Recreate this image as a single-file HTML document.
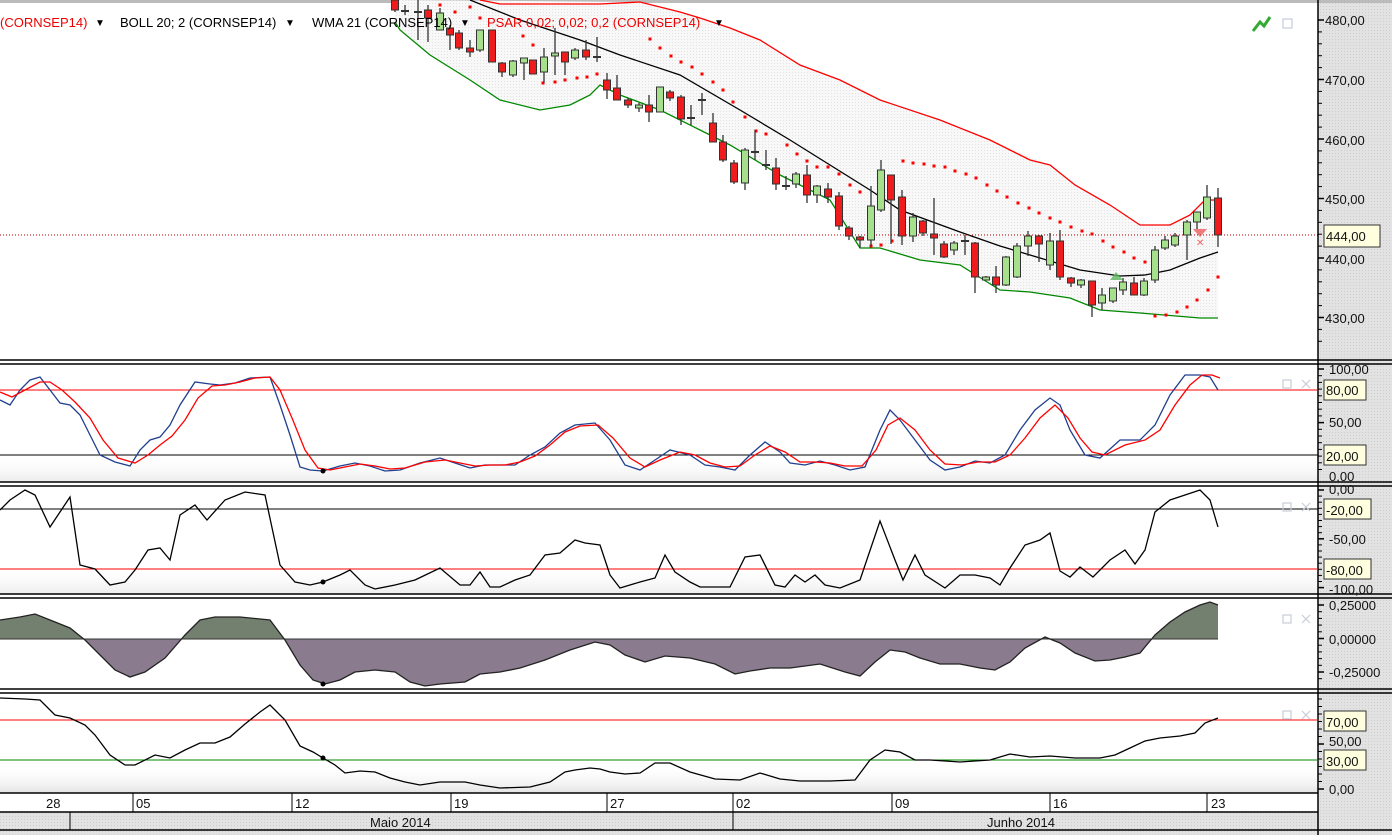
<!DOCTYPE html>
<html><head><meta charset="utf-8"><style>
html,body{margin:0;padding:0;background:#fff;}
svg{display:block;font-family:"Liberation Sans",sans-serif;}
</style></head><body>
<svg id="s" width="1392" height="835" viewBox="0 0 1392 835" xmlns="http://www.w3.org/2000/svg">
<defs>
<pattern id="dots" width="3" height="3" patternUnits="userSpaceOnUse"><rect width="3" height="3" fill="#f8f8f8"/><rect width="1" height="1" fill="#e2e2e2"/></pattern>
<pattern id="ax" width="3" height="3" patternUnits="userSpaceOnUse"><rect width="3" height="3" fill="#e2e2e2"/><rect width="1" height="1" fill="#cfcfcf"/></pattern>
<clipPath id="above"><rect x="0" y="597" width="1318" height="42"/></clipPath>
<clipPath id="below"><rect x="0" y="639" width="1318" height="52"/></clipPath>
<linearGradient id="gb" x1="0" y1="0" x2="0" y2="1"><stop offset="0" stop-color="#fff" stop-opacity="0"/><stop offset="1" stop-color="#d8d8d8"/></linearGradient>
</defs>
<rect x="0" y="0" width="1392" height="835" fill="#fff"/>
<rect x="1318" y="0" width="74" height="835" fill="url(#ax)"/>
<rect x="0" y="812" width="1318" height="23" fill="url(#ax)"/>
<rect x="0" y="0" width="1392" height="3" fill="#bbb"/>
<rect x="0" y="455" width="1318" height="27" fill="url(#gb)" opacity="0.5"/>
<rect x="0" y="565" width="1318" height="30" fill="url(#gb)" opacity="0.5"/>
<rect x="0" y="765" width="1318" height="28" fill="url(#gb)" opacity="0.7"/>

<polygon fill="url(#dots)" points="395,0 640,2 700,18 760,40 800,65 840,80 880,100 940,120 990,140 1050,165 1075,185 1110,205 1140,225 1170,225 1190,215 1205,200 1218,200 1218,318 1200,318 1140,313 1100,310 1070,298 1030,292 1000,290 960,265 920,260 880,248 860,248 830,200 780,175 730,145 700,130 660,110 620,95 600,85 590,95 570,105 540,110 500,100 470,80 430,55 400,30 395,20"/>
<polyline fill="none" stroke="#f00" stroke-width="1.3" points="480,0 500,4 560,4 600,4 640,2 680,12 700,18 730,28 760,40 800,65 840,80 880,100 940,120 990,140 1030,160 1050,165 1075,185 1110,205 1140,225 1170,225 1190,215 1205,200 1218,200"/>
<polyline fill="none" stroke="#000" stroke-width="1.3" points="470,0 520,20 580,40 620,55 680,75 740,110 790,140 830,165 870,190 900,210 960,232 1000,246 1040,258 1080,270 1120,276 1145,275 1170,270 1200,258 1218,252"/>
<polyline fill="none" stroke="#080" stroke-width="1.3" points="395,22 400,30 430,55 470,80 500,100 540,110 570,105 590,95 600,85 620,95 660,110 700,130 730,145 780,175 830,200 860,248 880,248 920,260 960,265 1000,290 1030,292 1070,298 1100,310 1140,313 1200,318 1218,318"/>
<line x1="0" y1="235" x2="1318" y2="235" stroke="#c00" stroke-width="1" stroke-dasharray="1,2"/>
<g id="psar" fill="#f00"></g>
<g id="candles"></g>
<polygon points="1110,280 1116,272 1123,280" fill="#5cb85c" opacity="0.8"/>
<polygon points="1193,229 1207,229 1200,237" fill="#e44" opacity="0.7"/>
<text x="1196" y="246" font-size="10" fill="#e66">✕</text>

<g font-size="13">
<text x="0" y="27" fill="#e00">(CORNSEP14)</text><text x="95" y="26" font-size="10">▼</text>
<text x="120" y="27" fill="#000">BOLL 20; 2 (CORNSEP14)</text><text x="285" y="26" font-size="10">▼</text>
<text x="312" y="27" fill="#000">WMA 21 (CORNSEP14)</text><text x="460" y="26" font-size="10">▼</text>
<text x="487" y="27" fill="#e00">PSAR 0,02; 0,02; 0,2 (CORNSEP14)</text><text x="714" y="26" font-size="10">▼</text>
</g>
<path d="M1253,31 L1260,22 L1264,26 L1270,17" stroke="#3a3" stroke-width="3" fill="none"/>
<rect x="1283" y="19" width="9" height="9" fill="none" stroke="#b8c0d8"/>

<g stroke="#000" stroke-width="1.5">
<line x1="0" y1="360" x2="1392" y2="360"/><line x1="0" y1="364" x2="1392" y2="364"/>
<line x1="0" y1="482" x2="1392" y2="482"/><line x1="0" y1="486" x2="1392" y2="486"/>
<line x1="0" y1="594" x2="1392" y2="594"/><line x1="0" y1="598" x2="1392" y2="598"/>
<line x1="0" y1="689" x2="1392" y2="689"/><line x1="0" y1="693" x2="1392" y2="693"/>
<line x1="0" y1="793" x2="1318" y2="793"/><line x1="0" y1="812" x2="1318" y2="812"/><line x1="0" y1="830" x2="1392" y2="830"/>
<line x1="1318" y1="0" x2="1318" y2="835"/>
</g>

<line x1="0" y1="390" x2="1318" y2="390" stroke="#f00"/>
<line x1="0" y1="455" x2="1318" y2="455" stroke="#000"/>
<polyline fill="none" stroke="#1f3f8f" stroke-width="1.3" points="0,400 10,405 20,390 30,380 40,377 50,390 60,403 70,405 80,415 90,435 100,455 115,462 130,466 140,450 150,440 160,437 170,425 180,405 195,382 210,384 220,385 235,383 250,378 270,377 280,405 290,435 300,467 310,470 323,471 340,466 355,463 370,466 385,471 400,470 420,463 440,458 455,463 470,468 485,465 500,465 515,465 530,455 545,447 560,433 575,425 595,423 610,440 625,465 640,470 655,460 670,450 690,455 705,465 720,467 735,470 750,455 765,442 780,452 790,463 805,465 820,461 835,465 850,470 865,467 880,430 890,410 900,420 915,440 930,460 945,470 960,467 975,461 990,463 1005,455 1020,430 1035,410 1050,398 1060,405 1070,430 1085,455 1100,458 1120,440 1140,440 1155,425 1170,395 1185,375 1200,375 1210,377 1218,390"/>
<polyline fill="none" stroke="#f00" stroke-width="1.3" points="0,392 12,397 25,390 40,382 50,382 62,390 75,402 90,418 103,440 118,458 135,463 148,455 160,445 172,436 185,420 198,398 212,386 225,385 240,382 255,378 270,377 280,390 292,418 305,450 318,468 330,470 345,467 360,464 375,466 390,469 405,468 425,462 445,460 460,463 475,466 490,465 505,465 520,462 535,456 550,445 565,432 580,426 598,425 613,438 630,458 645,467 660,460 680,452 695,455 710,463 725,467 740,466 755,455 770,446 785,452 800,462 815,462 830,463 845,466 862,466 876,450 888,425 900,418 915,430 930,450 945,464 962,465 978,462 995,462 1010,455 1025,438 1040,418 1055,405 1068,418 1080,438 1092,452 1105,455 1125,445 1145,440 1160,430 1175,405 1190,385 1202,375 1212,375 1220,378"/>
<circle cx="323" cy="471" r="2.5" fill="#000"/>

<line x1="0" y1="509" x2="1318" y2="509" stroke="#000"/>
<line x1="0" y1="569" x2="1318" y2="569" stroke="#f00"/>
<polyline fill="none" stroke="#000" stroke-width="1.3" points="0,510 10,500 25,490 35,495 50,527 70,497 80,565 95,569 110,585 125,582 135,570 148,550 160,548 170,560 180,515 195,505 207,520 225,500 245,492 265,495 280,565 295,582 310,585 323,582 340,575 350,570 365,585 375,589 395,585 415,580 440,568 460,585 470,585 480,572 490,587 500,587 515,580 530,575 545,555 560,553 575,540 585,543 600,545 610,575 620,588 640,582 655,578 665,555 675,572 690,582 700,587 720,587 730,587 745,557 760,555 775,585 785,587 795,575 805,582 815,575 825,585 840,588 860,580 880,521 895,560 903,580 915,555 925,575 945,588 960,575 975,575 990,578 1000,585 1010,568 1025,545 1040,540 1050,533 1060,571 1070,577 1080,567 1093,577 1110,560 1125,550 1135,564 1145,550 1155,512 1170,500 1185,495 1200,490 1210,500 1218,527"/>
<circle cx="323" cy="582" r="2.5" fill="#000"/>

<g id="macd"></g>

<line x1="0" y1="720" x2="1318" y2="720" stroke="#f00"/>
<line x1="0" y1="760" x2="1318" y2="760" stroke="#080"/>
<polyline fill="none" stroke="#000" stroke-width="1.3" points="0,698 25,699 40,700 55,715 70,718 85,725 95,735 110,755 125,765 135,765 155,755 170,758 185,750 200,743 215,743 230,737 245,724 260,712 270,705 285,720 300,746 313,752 323,758 335,765 345,773 360,771 375,772 390,778 405,782 420,785 440,782 465,782 480,785 500,788 530,787 550,782 565,772 575,770 590,768 600,769 610,772 625,774 640,773 655,763 670,763 690,772 715,779 740,780 760,773 780,779 800,781 830,781 855,780 870,760 885,750 900,752 915,760 930,760 960,762 990,760 1010,754 1030,757 1050,756 1075,758 1100,758 1115,755 1130,748 1145,741 1160,738 1180,736 1195,733 1205,723 1218,718"/>
<circle cx="323" cy="758" r="2.5" fill="#000"/>

<g fill="none" stroke="#c8ccd8" stroke-width="1.2">
<rect x="1283" y="380" width="8" height="8"/><path d="M1302,380 l8,8 M1310,380 l-8,8"/>
<rect x="1283" y="503" width="8" height="8"/><path d="M1302,503 l8,8 M1310,503 l-8,8"/>
<rect x="1283" y="615" width="8" height="8"/><path d="M1302,615 l8,8 M1310,615 l-8,8"/>
<rect x="1283" y="711" width="8" height="8"/><path d="M1302,711 l8,8 M1310,711 l-8,8"/>
</g>

<g stroke="#000" stroke-width="1">
<line x1="133" y1="793" x2="133" y2="812"/><line x1="292" y1="793" x2="292" y2="812"/><line x1="451" y1="793" x2="451" y2="812"/><line x1="607" y1="793" x2="607" y2="812"/><line x1="733" y1="793" x2="733" y2="812"/><line x1="892" y1="793" x2="892" y2="812"/><line x1="1050" y1="793" x2="1050" y2="812"/><line x1="1207" y1="793" x2="1207" y2="812"/>
<line x1="70" y1="812" x2="70" y2="830"/><line x1="733" y1="812" x2="733" y2="830"/>
</g>
<g font-size="13" fill="#111">
<text x="46" y="808">28</text><text x="136" y="808">05</text><text x="295" y="808">12</text><text x="454" y="808">19</text><text x="610" y="808">27</text><text x="736" y="808">02</text><text x="895" y="808">09</text><text x="1053" y="808">16</text><text x="1211" y="808">23</text>
<text x="370" y="827">Maio 2014</text><text x="987" y="827">Junho 2014</text>
</g>

<g id="ticks" stroke="#000"></g>
<g font-size="13" fill="#111">
<text x="1325" y="25">480,00</text><text x="1325" y="85">470,00</text><text x="1325" y="145">460,00</text><text x="1325" y="204">450,00</text><text x="1325" y="264">440,00</text><text x="1325" y="323">430,00</text>
<text x="1329" y="374">100,00</text><text x="1329" y="427">50,00</text><text x="1329" y="481">0,00</text>
<text x="1329" y="494">0,00</text><text x="1329" y="544">-50,00</text><text x="1329" y="594">-100,00</text>
<text x="1329" y="610">0,25000</text><text x="1329" y="644">0,00000</text><text x="1329" y="677">-0,25000</text>
<text x="1329" y="746">50,00</text><text x="1329" y="794">0,00</text>
</g>
<g font-size="13" fill="#111">
<rect x="1324" y="225" width="56" height="22" fill="#ffffe0" stroke="#333"/><text x="1326" y="241">444,00</text>
<rect x="1324" y="380" width="42" height="20" fill="#ffffe0" stroke="#333"/><text x="1326" y="395">80,00</text>
<rect x="1324" y="445" width="42" height="20" fill="#ffffe0" stroke="#333"/><text x="1326" y="461">20,00</text>
<rect x="1324" y="499" width="47" height="20" fill="#ffffe0" stroke="#333"/><text x="1326" y="515">-20,00</text>
<rect x="1324" y="559" width="47" height="20" fill="#ffffe0" stroke="#333"/><text x="1326" y="575">-80,00</text>
<rect x="1324" y="711" width="42" height="20" fill="#ffffe0" stroke="#333"/><text x="1326" y="727">70,00</text>
<rect x="1324" y="750" width="42" height="20" fill="#ffffe0" stroke="#333"/><text x="1326" y="766">30,00</text>
</g>
</svg>
<script>
var NS="http://www.w3.org/2000/svg";
function el(p,t,a){var e=document.createElementNS(NS,t);for(var k in a)e.setAttribute(k,a[k]);p.appendChild(e);return e;}
var C=[[395,0,10,0,12,'r'],[405,10,12,5,15,'d'],[418,11,13,0,40,'d'],[428,10,18,5,42,'r'],[440,13,30,8,30,'g'],[450,28,35,25,50,'r'],[459,33,48,30,50,'r'],[470,48,52,40,57,'r'],[480,30,50,30,52,'g'],[492,30,62,30,62,'r'],[502,63,72,62,77,'r'],[513,61,75,60,77,'g'],[524,58,63,58,80,'g'],[533,60,74,60,74,'r'],[544,57,72,48,83,'g'],[555,53,56,28,75,'g'],[565,52,62,52,75,'r'],[575,50,58,48,60,'g'],[586,50,57,40,60,'r'],[597,56,58,37,62,'d'],[607,80,90,73,99,'r'],[617,88,100,75,100,'r'],[628,100,105,98,108,'r'],[639,105,108,103,112,'g'],[649,105,112,95,122,'r'],[660,87,112,87,112,'g'],[670,92,98,90,101,'r'],[681,97,119,95,125,'r'],[691,117,119,105,125,'d'],[702,99,101,93,115,'d'],[713,123,142,113,142,'r'],[723,142,160,135,162,'r'],[734,163,182,160,184,'r'],[745,150,183,148,190,'g'],[755,151,153,130,160,'d'],[766,164,166,150,170,'d'],[776,168,184,158,190,'r'],[786,185,187,176,190,'d'],[796,174,184,172,188,'g'],[807,175,195,165,203,'r'],[817,186,195,185,203,'g'],[828,189,197,183,203,'r'],[839,196,226,192,230,'r'],[849,228,236,226,240,'r'],[860,237,240,236,248,'r'],[871,206,240,186,246,'g'],[881,170,210,160,212,'g'],[891,175,200,175,244,'r'],[902,197,236,190,245,'r'],[913,217,236,213,242,'g'],[923,221,233,220,236,'r'],[934,234,238,198,255,'r'],[944,244,257,241,258,'r'],[954,243,250,241,255,'g'],[965,240,242,235,255,'d'],[975,243,277,242,293,'r'],[986,277,280,276,280,'g'],[996,277,285,266,293,'r'],[1006,257,285,256,286,'g'],[1017,246,277,243,278,'g'],[1028,236,246,231,256,'g'],[1039,236,244,235,262,'r'],[1050,241,265,233,270,'g'],[1060,241,277,230,280,'r'],[1071,278,283,277,287,'r'],[1081,280,285,279,288,'g'],[1092,281,305,281,317,'r'],[1102,295,303,288,310,'g'],[1113,288,301,288,303,'g'],[1123,282,290,278,295,'g'],[1134,283,295,277,295,'r'],[1144,281,295,278,296,'g'],[1155,250,280,246,283,'g'],[1165,240,248,236,250,'g'],[1175,236,245,233,247,'g'],[1187,222,235,220,260,'g'],[1197,212,222,212,229,'g'],[1207,197,218,185,220,'g'],[1218,198,235,188,247,'r']];
var g=document.getElementById('candles');
C.forEach(function(c){var x=c[0];
 el(g,'line',{x1:x,y1:c[3],x2:x,y2:c[4],stroke:'#333','stroke-width':1.3});
 if(c[5]=='d'){el(g,'line',{x1:x-4,y1:c[1]+1,x2:x+4,y2:c[1]+1,stroke:'#333','stroke-width':2});}
 else el(g,'rect',{x:x-3.5,y:c[1],width:7,height:Math.max(2,c[2]-c[1]),fill:c[5]=='r'?'#ee1c1c':'#a6e08c',stroke:'#333','stroke-width':1});
});
var P=[[440,5],[455,12],[470,7],[480,18],[523,36],[533,45],[543,83],[555,82],[565,80],[577,78],[587,77],[597,74],[650,39],[660,48],[671,56],[681,62],[692,67],[702,74],[713,82],[723,90],[733,102],[745,117],[756,131],[766,134],[787,145],[797,154],[807,161],[817,167],[828,167],[839,174],[850,185],[860,192],[871,246],[881,245],[892,241],[903,161],[913,163],[924,164],[934,166],[945,167],[955,171],[966,174],[976,178],[987,185],[997,191],[1007,197],[1018,203],[1029,208],[1039,213],[1050,218],[1060,222],[1071,227],[1082,231],[1092,234],[1103,241],[1113,247],[1124,252],[1134,258],[1145,262],[1155,316],[1166,315],[1177,312],[1187,307],[1197,300],[1208,290],[1218,277]];
var pg=document.getElementById('psar');P.forEach(function(p){el(pg,'rect',{x:p[0]-1.5,y:p[1]-1.5,width:3,height:3});});
var M="0,620 20,617 35,614 50,620 70,628 85,640 100,655 115,670 130,677 145,672 165,658 185,635 200,620 215,617 240,617 270,620 285,640 300,665 313,680 325,684 340,680 355,672 375,670 395,672 410,682 425,686 440,684 465,682 480,674 500,672 520,668 545,660 570,650 595,642 610,645 625,655 645,662 665,656 690,658 715,664 735,674 750,671 770,668 790,668 820,664 845,672 860,676 875,662 890,650 905,652 920,658 940,664 960,664 980,668 995,670 1010,662 1025,648 1045,637 1060,643 1075,653 1095,661 1110,660 1125,657 1140,653 1155,635 1170,622 1185,612 1200,605 1210,602 1218,605";
var mg=document.getElementById('macd');var poly="0,639 "+M+" 1218,639";
el(mg,'polygon',{points:poly,fill:'#74806f','clip-path':'url(#above)'});
el(mg,'polygon',{points:poly,fill:'#8a7c8e','clip-path':'url(#below)'});
el(mg,'line',{x1:0,y1:639,x2:1218,y2:639,stroke:'#333','stroke-width':1});
el(mg,'polyline',{points:M,fill:'none',stroke:'#222','stroke-width':1.3});
el(mg,'circle',{cx:323,cy:684,r:2.5,fill:'#000'});
var t=document.getElementById('ticks');
function ticks(a,b,step,major){for(var y=a;y<=b;y+=step){var m=major.some(function(v){return Math.abs(v-y)<step/2;});el(t,'line',{x1:1318,y1:y,x2:m?1324:1322,y2:y,'stroke-width':m?1.5:1});}}
ticks(20,350,11.9,[20,80,140,199,258,318]);
ticks(369,476,6.7,[369,421,476]);
ticks(490,588,6.1,[490,539,588]);
ticks(605,685,6.7,[605,639,672]);
ticks(699,789,7.5,[741,789]);
</script>
</body></html>
